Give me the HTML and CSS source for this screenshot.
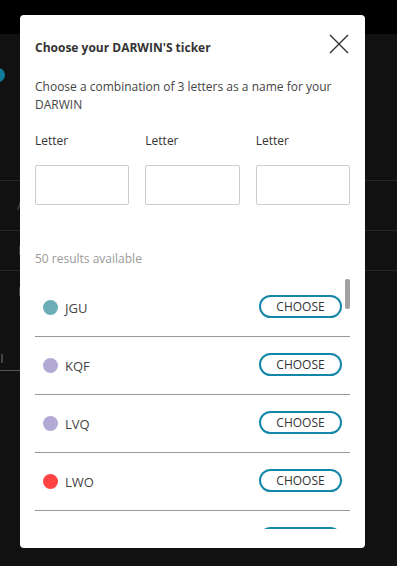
FILE: index.html
```html
<!DOCTYPE html>
<html lang="en">
<head>
    <meta charset="UTF-8">
    <title>Choose your DARWIN'S ticker</title>
    <link rel="stylesheet" href="styles.css">
</head>
<body>
    <div class="page">
        <div class="topbar"></div>
        <div class="hero">
            <span class="hero-dot"></span>
        </div>
        <div class="bg-row bg-row-tall"><span class="bg-text">A</span></div>
        <div class="bg-row"><span class="bg-mark"></span></div>
        <div class="bg-tabs">
            <span class="bg-mark bg-mark-low"></span>
            <div class="bg-tab"><span class="bg-tab-bar"></span></div>
        </div>
    </div>

    <div class="modal">
        <div class="modal-header">
            <h2 class="modal-title">Choose your DARWIN'S ticker</h2>
            <button class="close-btn" type="button" aria-label="Close">
                <svg width="20" height="20" viewBox="0 0 20 20">
                    <path d="M1 1 L19 19 M19 1 L1 19" stroke="#333" stroke-width="1.4" fill="none"/>
                </svg>
            </button>
        </div>
        <p class="modal-desc">Choose a combination of 3 letters as a name for your DARWIN</p>

        <div class="letters">
            <div class="letter-group">
                <label for="l1">Letter</label>
                <input type="text" id="l1" maxlength="1">
            </div>
            <div class="letter-group">
                <label for="l2">Letter</label>
                <input type="text" id="l2" maxlength="1">
            </div>
            <div class="letter-group">
                <label for="l3">Letter</label>
                <input type="text" id="l3" maxlength="1">
            </div>
        </div>

        <div class="results-count">50 results available</div>

        <div class="results">
            <ul class="result-list">
                <li class="result">
                    <span class="dot dot-teal"></span>
                    <span class="ticker">JGU</span>
                    <button class="choose-btn" type="button">CHOOSE</button>
                </li>
                <li class="result">
                    <span class="dot dot-lilac"></span>
                    <span class="ticker">KQF</span>
                    <button class="choose-btn" type="button">CHOOSE</button>
                </li>
                <li class="result">
                    <span class="dot dot-lilac"></span>
                    <span class="ticker">LVQ</span>
                    <button class="choose-btn" type="button">CHOOSE</button>
                </li>
                <li class="result">
                    <span class="dot dot-red"></span>
                    <span class="ticker">LWO</span>
                    <button class="choose-btn" type="button">CHOOSE</button>
                </li>
                <li class="result">
                    <span class="dot dot-teal"></span>
                    <span class="ticker">MBX</span>
                    <button class="choose-btn" type="button">CHOOSE</button>
                </li>
            </ul>
            <span class="scroll-thumb"></span>
        </div>
    </div>
</body>
</html>
```

FILE: styles.css
```css
body {
    margin: 0;
    background-color: #111;
    font-family: "Open Sans", "Liberation Sans", sans-serif;
    overflow: hidden;
}

/* background page behind the modal */
.topbar {
    height: 34px;
    background-color: #000;
}
.hero {
    height: 147px;
    border-bottom: 1px solid #262626;
    padding-top: 34px;
    box-sizing: border-box;
}
.hero-dot {
    display: block;
    width: 14px;
    height: 14px;
    margin-left: -9px;
    border-radius: 50%;
    background-color: #0e7d9c;
}
.bg-row {
    height: 39px;
    border-bottom: 1px solid #262626;
    display: flex;
    align-items: center;
    padding-left: 17px;
}
.bg-row-tall {
    height: 49px;
}
.bg-text {
    color: #555;
    font-size: 12px;
}
.bg-mark {
    display: block;
    width: 2px;
    height: 9px;
    background-color: #444;
    margin-left: 2px;
}
.bg-tabs {
    height: 100px;
    padding-top: 16px;
    box-sizing: border-box;
    display: flex;
    flex-direction: column;
}
.bg-mark-low {
    margin-left: 19px;
}
.bg-tab {
    margin-top: 56px;
    width: 20px;
    height: 19px;
    border-bottom: 1px solid #555;
    position: relative;
}
.bg-tab-bar {
    position: absolute;
    left: 1px;
    top: 2px;
    width: 2px;
    height: 9px;
    background-color: #444;
}

/* modal */
.modal {
    position: absolute;
    top: 15px;
    left: 20px;
    width: 345px;
    box-sizing: border-box;
    padding: 19px 15px 19px;
    background-color: #fff;
    border-radius: 4px;
    color: #333;
}
.modal-header {
    display: flex;
    justify-content: space-between;
    align-items: flex-start;
}
.modal-title {
    margin: 5px 0 0;
    font-size: 12px;
    line-height: 18px;
    font-weight: 700;
    color: #333;
}
.close-btn {
    margin: 0 1px 0 0;
    padding: 0;
    border: none;
    background: none;
    width: 20px;
    height: 20px;
    cursor: pointer;
}
.close-btn svg {
    display: block;
}
.modal-desc {
    margin: 21px 0 0;
    font-size: 12px;
    line-height: 18px;
    color: #444;
}

.letters {
    margin-top: 18px;
    display: grid;
    grid-template-columns: repeat(3, 1fr);
    gap: 16px;
}
.letter-group label {
    display: block;
    font-size: 12px;
    line-height: 18px;
    color: #333;
    margin-bottom: 15px;
}
.letter-group input {
    display: block;
    width: 100%;
    height: 40px;
    box-sizing: border-box;
    border: 1px solid #ccc;
    border-radius: 2px;
    padding: 0 8px;
    font-family: inherit;
}

.results-count {
    margin-top: 45px;
    font-size: 12px;
    line-height: 18px;
    color: #999;
}

.results {
    position: relative;
    margin-top: 11px;
    height: 250px;
    overflow: hidden;
}
.result-list {
    list-style: none;
    margin: 0;
    padding: 0;
}
.result {
    display: flex;
    align-items: center;
    height: 57px;
    border-bottom: 1px solid #999;
    padding: 0 8px;
}
.dot {
    width: 15px;
    height: 15px;
    border-radius: 50%;
    margin-right: 7px;
}
.dot-teal {
    background-color: #6caeb6;
}
.dot-lilac {
    background-color: #b2a9d5;
}
.dot-red {
    background-color: #ff4343;
}
.ticker {
    flex: 1;
    font-size: 13px;
    color: #444;
}
.choose-btn {
    width: 83px;
    height: 23px;
    margin-bottom: 2px;
    box-sizing: border-box;
    border: 2px solid #1487a8;
    border-radius: 12px;
    background-color: #fff;
    color: #333;
    font-family: inherit;
    font-size: 12px;
    padding: 0;
    cursor: pointer;
}
.scroll-thumb {
    position: absolute;
    top: 0;
    right: 0;
    width: 5px;
    height: 30px;
    border-radius: 2px;
    background-color: #a0a0a0;
}
```
